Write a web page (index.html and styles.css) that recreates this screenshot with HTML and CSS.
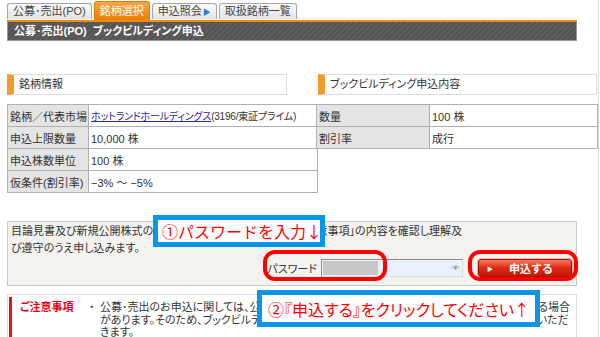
FILE: index.html
```html
<!DOCTYPE html>
<html lang="ja">
<head>
  <meta charset="UTF-8" />
  <title>公募･売出(PO) ブックビルディング申込</title>
  <link rel="stylesheet" href="styles.css">
</head>
<body>
  <div class="page">
    <!-- Tabs -->
    <ul class="tabs">
      <li class="tab">公募･売出(PO)</li>
      <li class="tab active">銘柄選択</li>
      <li class="tab">申込照会<span class="tab-arrow">▶</span></li>
      <li class="tab">取扱銘柄一覧</li>
    </ul>

    <h1 class="title-bar">公募･売出(PO)&nbsp;&nbsp;ブックビルディング申込</h1>

    <!-- Issue info + order details -->
    <div class="info">
      <section class="info-col">
        <h2 class="section-head head-left">銘柄情報</h2>
        <table class="spec spec-left">
          <tr><th>銘柄／代表市場</th><td class="tight"><a href="#">ホットランドホールディングス</a>(3196/東証プライム)</td></tr>
          <tr><th>申込上限数量</th><td>10,000 株</td></tr>
          <tr><th>申込株数単位</th><td>100 株</td></tr>
          <tr><th>仮条件(割引率)</th><td>−3% 〜 −5%</td></tr>
        </table>
      </section>
      <section class="info-col">
        <h2 class="section-head head-right">ブックビルディング申込内容</h2>
        <table class="spec spec-right">
          <tr><th>数量</th><td>100 株</td></tr>
          <tr><th>割引率</th><td>成行</td></tr>
        </table>
      </section>
    </div>

    <!-- Confirmation -->
    <div class="confirm">
      <p class="confirm-text">目論見書及び新規公開株式の要項、目論見書補完書面及び「ご注意事項」の内容を確認し理解及<br>び遵守のうえ申し込みます。</p>
      <div class="pw-row">
        <label class="pw-label">パスワード</label>
        <span class="pw-input">
          <span class="pw-mask"></span>
          <svg class="pw-eye" width="9" height="6" viewBox="0 0 9 6"><path d="M0.5 3 Q4.5 -1 8.5 3" fill="none" stroke="#999" stroke-width="1"/><circle cx="4.5" cy="3.2" r="1.4" fill="#999"/></svg>
        </span>
        <button class="submit-btn" type="button"><span class="btn-arrow">▶</span>申込する</button>
      </div>
    </div>

    <!-- Notes -->
    <div class="caution">
      <div class="caution-body">
        <div class="caution-title">ご注意事項</div>
        <ul class="caution-list">
          <li>公募･売出のお申込に関しては、公募･売出価格が仮条件の上限又は下限の範囲外で決定される場合があります。そのため、ブックビルディングの申込内容にかかわらず、別途ご購入のお申込をしていただきます。</li>
        </ul>
      </div>
    </div>

    <!-- Annotations -->
    <div class="callout callout-pw">①パスワードを入力↓</div>
    <div class="ring ring-pw"></div>
    <div class="ring ring-btn"></div>
    <div class="callout callout-btn">②『申込する』をクリックしてください↑</div>
  </div>
</body>
</html>
```

FILE: styles.css
```css
html, body {
  margin: 0;
  padding: 0;
  overflow: hidden;
  background: #fff;
}
body {
  font-family: "Liberation Sans", "Noto Sans CJK JP", sans-serif;
  font-size: 11px;
  color: #333;
  font-feature-settings: "palt";
}
.page {
  position: relative;
  box-sizing: border-box;
  width: 599px;
  height: 337px;
  padding: 2px 0 0 7px;
  border-right: 1px solid #ddd;
}

/* ---------- tabs ---------- */
.tabs {
  display: flex;
  align-items: flex-end;
  gap: 2px;
  height: 18px;
  margin: 0;
  padding: 0;
  list-style: none;
}
.tab {
  height: 15px;
  line-height: 15px;
  margin-bottom: 1px;
  padding: 0 5px;
  border: 1px solid #a5a5a5;
  border-bottom: none;
  border-radius: 3px 3px 0 0;
  background: linear-gradient(#fbfbfb, #e3e3e3);
  color: #444;
}
.tab.active {
  height: 18px;
  line-height: 18px;
  margin-bottom: 0;
  border-color: #e07a00;
  background: linear-gradient(#f7a64a, #ef7d00);
  color: #fff;
}
.tab-arrow {
  color: #2a7fd4;
  font-size: 8px;
  margin-left: 1px;
}

/* ---------- title bar ---------- */
.title-bar {
  box-sizing: border-box;
  width: 570px;
  height: 21px;
  margin: 0;
  padding-left: 6px;
  border: 1px solid #9a9a9a;
  border-top: 2px solid #f08c00;
  background: repeating-linear-gradient(135deg, #545454 0 2px, #5e5e5e 2px 4px);
  color: #fff;
  font-size: 11px;
  font-weight: bold;
  line-height: 18px;
}

/* ---------- info tables ---------- */
.info {
  display: grid;
  grid-template-columns: 310px 281px;
  margin-top: 33px;
}
.section-head {
  box-sizing: border-box;
  height: 21px;
  margin: 0 0 9px 0;
  padding-left: 5px;
  border: 1px solid #dcdcdc;
  border-left: 7px solid #f59a2c;
  font-size: 11px;
  font-weight: normal;
  line-height: 19px;
  color: #333;
}
.head-left {
  width: 280px;
}
.head-right {
  width: 279px;
  margin-left: 1px;
}
.spec {
  border-collapse: collapse;
  table-layout: fixed;
}
.spec-left {
  width: 311px;
}
.spec-right {
  width: 282px;
  margin-left: -1px;
}
.spec th,
.spec td {
  height: 21px;
  padding: 0 2px;
  border: 1px solid #b0b0b0;
  font-weight: normal;
  text-align: left;
  white-space: nowrap;
  overflow: hidden;
}
.spec th {
  background: #e4e4e4;
}
.spec-left th {
  width: 76px;
}
.spec-right th {
  width: 108px;
}
.spec a {
  color: #2727a8;
}
.spec .tight {
  font-size: 10px;
  letter-spacing: -0.2px;
}

/* ---------- confirmation ---------- */
.confirm {
  box-sizing: border-box;
  width: 570px;
  margin-top: 28px;
  padding: 1px 4px 7px 3px;
  border: 1px solid #c9c9c9;
  background: #f4f2ee;
}
.confirm-text {
  margin: 0;
  line-height: 17px;
}
.pw-row {
  display: flex;
  justify-content: flex-end;
  align-items: center;
  height: 20px;
  margin-top: 1px;
}
.pw-label {
  margin-right: 4px;
}
.pw-input {
  display: flex;
  align-items: center;
  box-sizing: border-box;
  width: 142px;
  height: 18px;
  padding: 1px;
  border: 1px solid #8a8a8a;
  border-right-color: #ddd;
  border-bottom-color: #ddd;
  background: #e9f1fc;
}
.pw-mask {
  width: 55px;
  height: 14px;
  background: #c7c7c7;
}
.pw-eye {
  margin-left: auto;
  margin-right: 1px;
}
.submit-btn {
  display: flex;
  align-items: center;
  box-sizing: border-box;
  width: 94px;
  height: 18px;
  margin-left: 15px;
  padding: 0 0 0 8px;
  border: 1px solid #a51200;
  border-radius: 3px;
  box-shadow: 0 0 0 1px #f2b3a8;
  background: linear-gradient(#f57a62, #dc2c12 50%, #c41805);
  color: #fff;
  font-family: "Liberation Sans", "Noto Sans CJK JP", sans-serif;
  font-size: 11px;
  font-weight: bold;
}
.btn-arrow {
  font-size: 6px;
  margin-right: 16px;
}

/* ---------- notes ---------- */
.caution {
  box-sizing: border-box;
  width: 570px;
  margin-top: 8px;
  padding: 2px 4px 0 1px;
  border: 1px solid #dcdcdc;
}
.caution-body {
  display: flex;
  padding: 4px 0 0 8px;
  border-left: 3px solid #e8141c;
  line-height: 12.5px;
}
.caution-title {
  flex: 0 0 71px;
  color: #e60012;
  font-weight: bold;
}
.caution-list {
  flex: 1;
  margin: 0;
  padding: 0;
  list-style: none;
}
.caution-list li {
  position: relative;
  padding-left: 9px;
}
.caution-list li::before {
  content: "・";
  position: absolute;
  left: -2px;
  top: 0;
}

/* ---------- annotations ---------- */
.callout {
  position: absolute;
  box-sizing: border-box;
  display: flex;
  align-items: center;
  border: 5px solid #0a96e6;
  background: #fff;
  color: #ff0000;
  font-family: "Noto Sans CJK JP", sans-serif;
  font-size: 16px;
  white-space: nowrap;
}
.callout-pw {
  left: 153px;
  top: 215px;
  width: 172px;
  height: 32px;
  padding-left: 4px;
  font-feature-settings: normal;
}
.callout-btn {
  left: 257px;
  top: 290px;
  width: 283px;
  height: 37px;
  padding-left: 6px;
}
.ring {
  position: absolute;
  box-sizing: border-box;
  border: 4px solid #ff0000;
  border-radius: 12px;
}
.ring-pw {
  left: 263px;
  top: 250px;
  width: 124px;
  height: 31px;
}
.ring-btn {
  left: 468px;
  top: 250px;
  width: 110px;
  height: 31px;
}
```
